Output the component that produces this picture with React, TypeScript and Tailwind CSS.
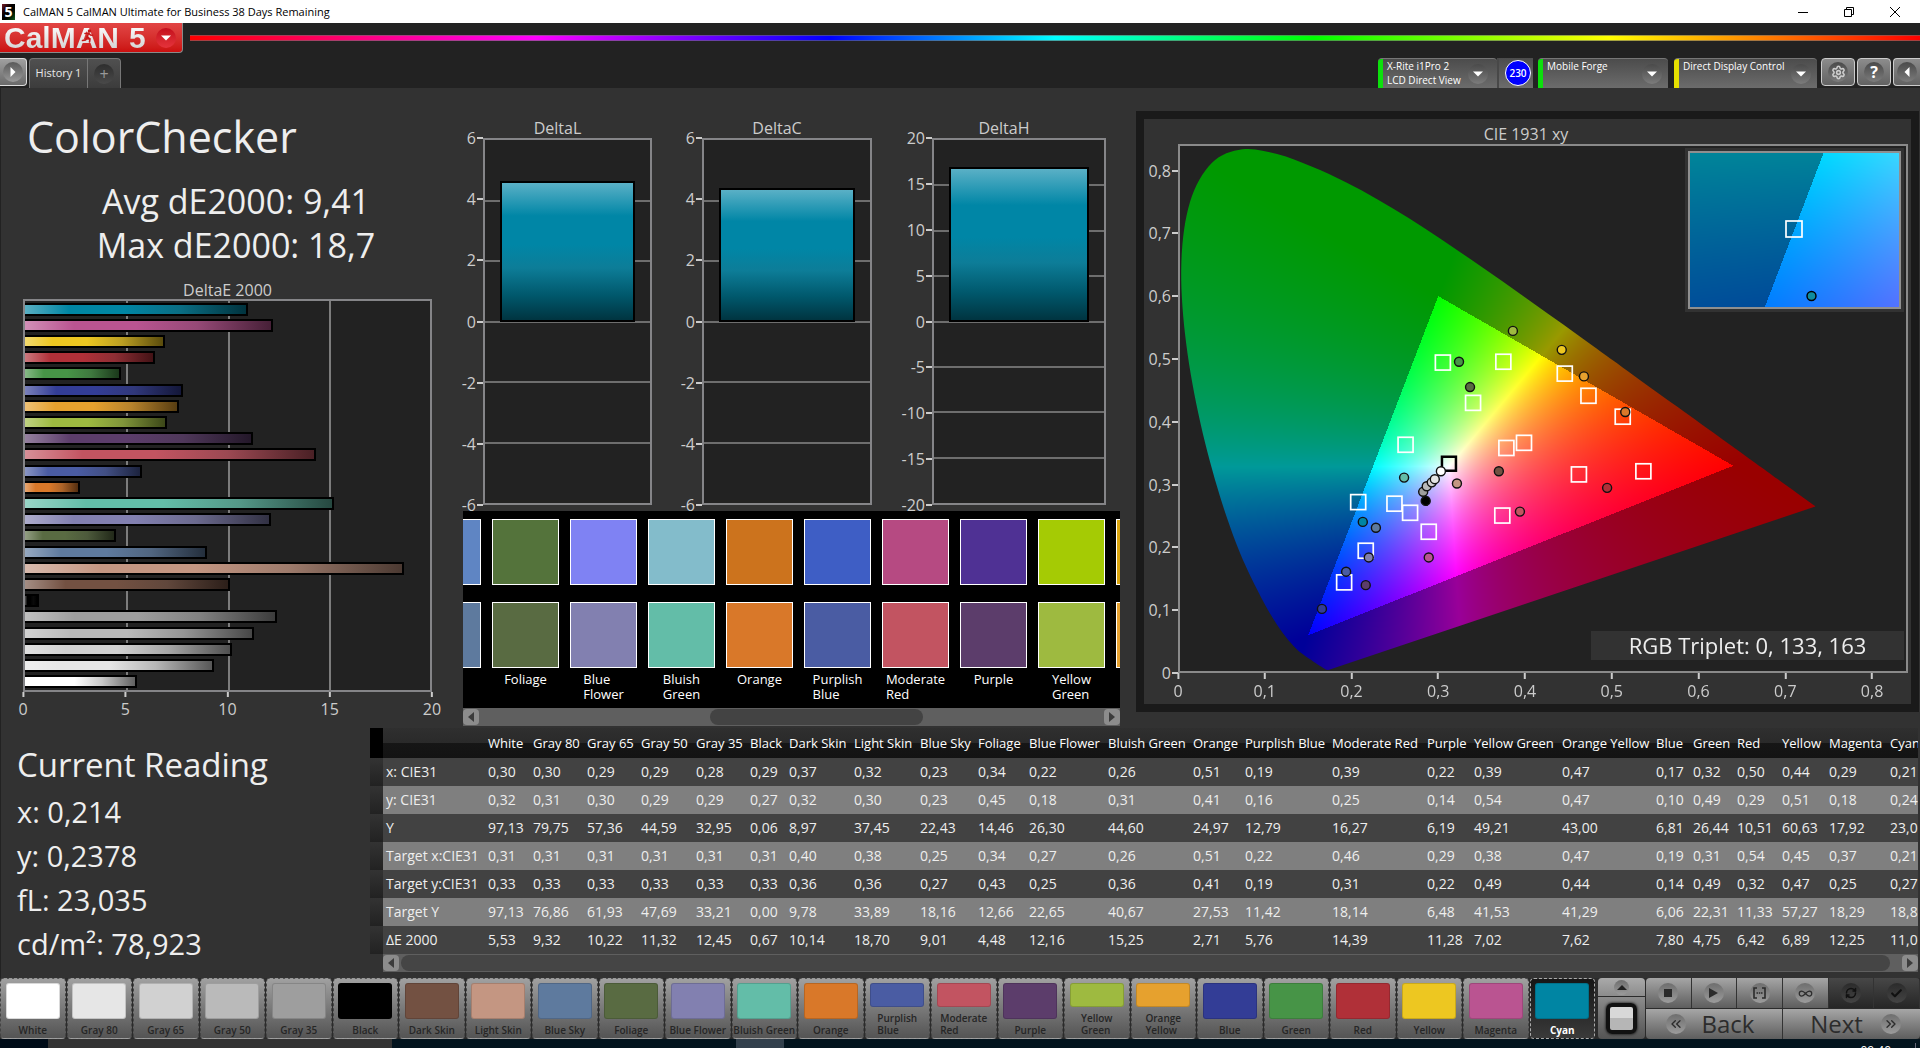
import { useEffect, useRef } from "react";
import type { ReactNode } from "react";
import clsx from "clsx";
import { Check, ChevronsLeft, ChevronsRight, Infinity as InfinityIcon, RefreshCw, Settings } from "lucide-react";

type Patch = { name: string; color: string; de: number };

const patches: Patch[] = [
    { name: "White", color: "#ffffff", de: 5.53 },
    { name: "Gray 80", color: "#e6e6e6", de: 9.32 },
    { name: "Gray 65", color: "#d1d1d1", de: 10.22 },
    { name: "Gray 50", color: "#bababa", de: 11.32 },
    { name: "Gray 35", color: "#9e9e9e", de: 12.45 },
    { name: "Black", color: "#000000", de: 0.67 },
    { name: "Dark Skin", color: "#735142", de: 10.14 },
    { name: "Light Skin", color: "#c49682", de: 18.7 },
    { name: "Blue Sky", color: "#5e7a9e", de: 9.01 },
    { name: "Foliage", color: "#596b42", de: 4.48 },
    { name: "Blue Flower", color: "#8280b0", de: 12.16 },
    { name: "Bluish Green", color: "#63bda8", de: 15.25 },
    { name: "Orange", color: "#d97829", de: 2.71 },
    { name: "Purplish Blue", color: "#4a5ca3", de: 5.76 },
    { name: "Moderate Red", color: "#c25461", de: 14.39 },
    { name: "Purple", color: "#5c3d6b", de: 11.28 },
    { name: "Yellow Green", color: "#9eba40", de: 7.02 },
    { name: "Orange Yellow", color: "#e6a12e", de: 7.62 },
    { name: "Blue", color: "#333d96", de: 7.8 },
    { name: "Green", color: "#479447", de: 4.75 },
    { name: "Red", color: "#b03038", de: 6.42 },
    { name: "Yellow", color: "#edc721", de: 6.89 },
    { name: "Magenta", color: "#ba5491", de: 12.25 },
    { name: "Cyan", color: "#0085a3", de: 11.02 },
];

const comparison = [
    { name: "Blue Sky", actual: "#5f85c3", target: "#5e7a9e" },
    { name: "Foliage", actual: "#54733b", target: "#596b42" },
    { name: "Blue Flower", actual: "#7f82f3", target: "#8280b0" },
    { name: "Bluish Green", actual: "#83bccb", target: "#63bda8" },
    { name: "Orange", actual: "#cc731d", target: "#d97829" },
    { name: "Purplish Blue", actual: "#3e5ec5", target: "#4a5ca3" },
    { name: "Moderate Red", actual: "#b64a82", target: "#c25461" },
    { name: "Purple", actual: "#4f3194", target: "#5c3d6b" },
    { name: "Yellow Green", actual: "#a5cb04", target: "#9eba40" },
    { name: "Orange Yellow", actual: "#dba50d", target: "#e6a12e" },
];

const columnWidths = [45, 54, 54, 55, 54, 39, 65, 66, 58, 51, 79, 85, 52, 87, 95, 47, 88, 94, 37, 44, 45, 47, 61, 64];

const tableRows = [
    { label: "x: CIE31", values: "0,30 0,30 0,29 0,29 0,28 0,29 0,37 0,32 0,23 0,34 0,22 0,26 0,51 0,19 0,39 0,22 0,39 0,47 0,17 0,32 0,50 0,44 0,29 0,21" },
    { label: "y: CIE31", values: "0,32 0,31 0,30 0,29 0,29 0,27 0,32 0,30 0,23 0,45 0,18 0,31 0,41 0,16 0,25 0,14 0,54 0,47 0,10 0,49 0,29 0,51 0,18 0,24" },
    { label: "Y", values: "97,13 79,75 57,36 44,59 32,95 0,06 8,97 37,45 22,43 14,46 26,30 44,60 24,97 12,79 16,27 6,19 49,21 43,00 6,81 26,44 10,51 60,63 17,92 23,0" },
    { label: "Target x:CIE31", values: "0,31 0,31 0,31 0,31 0,31 0,31 0,40 0,38 0,25 0,34 0,27 0,26 0,51 0,22 0,46 0,29 0,38 0,47 0,19 0,31 0,54 0,45 0,37 0,21" },
    { label: "Target y:CIE31", values: "0,33 0,33 0,33 0,33 0,33 0,33 0,36 0,36 0,27 0,43 0,25 0,36 0,41 0,19 0,31 0,22 0,49 0,44 0,14 0,49 0,32 0,47 0,25 0,27" },
    { label: "Target Y", values: "97,13 76,86 61,93 47,69 33,21 0,00 9,78 33,89 18,16 12,66 22,65 40,67 27,53 11,42 18,14 6,48 41,53 41,29 6,06 22,31 11,33 57,27 18,29 18,8" },
    { label: "ΔE 2000", values: "5,53 9,32 10,22 11,32 12,45 0,67 10,14 18,70 9,01 4,48 12,16 15,25 2,71 5,76 14,39 11,28 7,02 7,62 7,80 4,75 6,42 6,89 12,25 11,0" },
];

// Spectral locus, 400 - 700 nm
const locus: [number, number][] = [
    [0.1733, 0.0048], [0.1714, 0.0051], [0.1689, 0.0069], [0.1644, 0.0109], [0.1566, 0.0177],
    [0.144, 0.0297], [0.1355, 0.0399], [0.1241, 0.0578], [0.1096, 0.0868], [0.0913, 0.1327], [0.0687, 0.2007],
    [0.0454, 0.295], [0.0235, 0.4127], [0.0082, 0.5384], [0.0039, 0.6548], [0.0139, 0.7502], [0.0389, 0.812],
    [0.0743, 0.8338], [0.1142, 0.8262], [0.1547, 0.8059], [0.1929, 0.7816], [0.2296, 0.7543], [0.2658, 0.7243],
    [0.3016, 0.6923], [0.3373, 0.6589], [0.3731, 0.6245], [0.4087, 0.5896], [0.4441, 0.5547], [0.4788, 0.5202],
    [0.5125, 0.4866], [0.5752, 0.4242], [0.627, 0.3725], [0.6658, 0.334], [0.6915, 0.3083], [0.719, 0.2809],
    [0.7347, 0.2653],
];

const targets: [number, number][] = [
    [0.3053, 0.4943], [0.375, 0.4956], [0.4458, 0.4767], [0.4731, 0.4414], [0.3401, 0.4301], [0.5126, 0.4081],
    [0.2623, 0.3634], [0.3785, 0.3583], [0.3988, 0.3665], [0.4621, 0.3162], [0.5364, 0.3212], [0.2077, 0.2721],
    [0.2495, 0.2696], [0.2675, 0.2551], [0.289, 0.2249], [0.3738, 0.2507], [0.2164, 0.1947], [0.1915, 0.1443],
];

const readings: [number, number, string][] = [
    [0.386, 0.5447, "#9eba40"], [0.4423, 0.5145, "#edc721"], [0.4679, 0.4723, "#e6a12e"], [0.5155, 0.4156, "#d97829"],
    [0.3239, 0.4956, "#479447"], [0.3366, 0.4553, "#596b42"], [0.2606, 0.3111, "#63bda8"], [0.3698, 0.3212, "#735142"],
    [0.3215, 0.3017, "#c49682"], [0.4946, 0.2948, "#b03038"], [0.3941, 0.257, "#c25461"], [0.213, 0.2406, "#0085a3"],
    [0.2281, 0.2312, "#5e7a9e"], [0.289, 0.184, "#ba5491"], [0.2199, 0.184, "#8280b0"], [0.1938, 0.1613, "#4a5ca3"],
    [0.2164, 0.1399, "#5c3d6b"], [0.1659, 0.1021, "#333d96"], [0.2855, 0.274, "#000000"], [0.2826, 0.2885, "#9e9e9e"],
    [0.2867, 0.2973, "#bababa"], [0.2925, 0.3036, "#d1d1d1"], [0.296, 0.3086, "#e6e6e6"], [0.303, 0.3212, "#ffffff"],
];

type Domain = { x0: number; x1: number; y0: number; y1: number };

const fullDomain: Domain = { x0: 0, x1: 0.8414, y0: 0, y1: 0.8423 };
const insetDomain: Domain = { x0: 0.1739, x1: 0.2441, y0: 0.2365, y1: 0.3075 };

function xyToRgb(x: number, y: number) {
    const X = x / y;
    const Z = (1 - x - y) / y;
    const linear = [
        3.2406 * X - 1.5372 - 0.4986 * Z,
        -0.9689 * X + 1.8758 + 0.0415 * Z,
        0.0557 * X - 0.204 + 1.057 * Z,
    ];
    const inside = linear.every((v) => v >= 0);
    const max = Math.max(...linear);
    // out of gamut colors are drawn at 60%
    return linear.map((v) => (Math.max(v, 0) / max) * (inside ? 255 : 153));
}

function Chromaticity({ domain, width, height, clipped }: { domain: Domain; width: number; height: number; clipped?: boolean }) {
    const ref = useRef<HTMLCanvasElement>(null);

    useEffect(() => {
        const ctx = ref.current?.getContext("2d");
        if (!ctx) return;
        const buffer = document.createElement("canvas");
        buffer.width = width;
        buffer.height = height;
        const bctx = buffer.getContext("2d")!;
        const image = bctx.createImageData(width, height);
        for (let j = 0; j < height; j++) {
            const y = domain.y1 - ((j + 0.5) / height) * (domain.y1 - domain.y0);
            for (let i = 0; i < width; i++) {
                const x = domain.x0 + ((i + 0.5) / width) * (domain.x1 - domain.x0);
                const [r, g, b] = xyToRgb(x, y);
                image.data.set([r, g, b, 255], (j * width + i) * 4);
            }
        }
        bctx.putImageData(image, 0, 0);

        ctx.clearRect(0, 0, width, height);
        ctx.save();
        if (clipped) {
            const pts = locus.map(([x, y]) => [
                ((x - domain.x0) / (domain.x1 - domain.x0)) * width,
                ((domain.y1 - y) / (domain.y1 - domain.y0)) * height,
            ]);
            ctx.beginPath();
            ctx.moveTo(pts[0][0], pts[0][1]);
            for (let i = 0; i < pts.length - 1; i++) {
                const a = pts[Math.max(i - 1, 0)];
                const b = pts[i];
                const c = pts[i + 1];
                const d = pts[Math.min(i + 2, pts.length - 1)];
                ctx.bezierCurveTo(
                    b[0] + (c[0] - a[0]) / 6, b[1] + (c[1] - a[1]) / 6,
                    c[0] - (d[0] - b[0]) / 6, c[1] - (d[1] - b[1]) / 6,
                    c[0], c[1],
                );
            }
            ctx.closePath();
            ctx.clip();
        }
        ctx.drawImage(buffer, 0, 0);
        ctx.restore();
    }, [domain, width, height, clipped]);

    return <canvas ref={ref} width={width} height={height} className="block h-full w-full" />;
}

function TitleBar() {
    return (
        <header className="flex h-[23px] items-center justify-between bg-white text-black">
            <div className="flex items-center gap-2 pl-[2px]">
                <span className="flex h-4 w-[13px] items-center justify-center bg-gradient-to-br from-[#7a1f2a] via-black to-[#14601f] text-sm leading-none font-bold text-white">5</span>
                <h1 className="text-[11px] leading-4">CalMAN 5 CalMAN Ultimate for Business 38 Days Remaining</h1>
            </div>
            <div className="flex pr-[2px]">
                <button aria-label="Minimize" className="flex h-[23px] w-[46px] items-center justify-center">
                    <svg width="10" height="10" viewBox="0 0 10 10"><path d="M0 5.500H10" stroke="#000" /></svg>
                </button>
                <button aria-label="Restore" className="flex h-[23px] w-[46px] items-center justify-center">
                    <svg width="10" height="10" viewBox="0 0 10 10" fill="none" stroke="#000"><path d="M.5 2.500h7v7h-7zM2.500 2.500v-2h7v7h-2" /></svg>
                </button>
                <button aria-label="Close" className="flex h-[23px] w-[46px] items-center justify-center">
                    <svg width="10" height="10" viewBox="0 0 10 10"><path d="M0 0L10 10M10 0L0 10" stroke="#000" /></svg>
                </button>
            </div>
        </header>
    );
}

function Knob({ children, className }: { children: ReactNode; className?: string }) {
    return (
        <span className={clsx("flex size-5 shrink-0 items-center justify-center rounded-full bg-gradient-to-b", className ?? "from-[#4a4a4a] to-[#7c7c7c]")}>
            {children}
        </span>
    );
}

function DownArrow() {
    return <svg width="10" height="6" viewBox="0 0 10 6"><path d="M0 0.500h10L5 5.500z" fill="#fff" /></svg>;
}

function DevicePanel({ bar, lines, className }: { bar: string; lines: string[]; className: string }) {
    return (
        <button className={clsx("flex h-[30px] overflow-hidden rounded-t-sm border-t border-[#777] bg-gradient-to-b from-[#4c4c4c] to-[#6c6c6c] text-left text-[10px] leading-[14px] text-white", className)}>
            <span className={clsx("h-full w-[5px] shrink-0", bar)} />
            <span className="flex-1 pl-1 whitespace-nowrap">{lines.map((l) => <span key={l} className="block">{l}</span>)}</span>
            <span className="self-center pr-[6px]"><Knob><DownArrow /></Knob></span>
        </button>
    );
}

function Toolbar() {
    return (
        <div className="bg-[#222]">
            <div className="flex items-start">
                <button aria-label="CalMAN 5 menu" className="flex h-[30px] w-[183px] items-center justify-between rounded-br border-r border-b border-[#8a8a8a] bg-gradient-to-b from-[#e24545] to-[#cb0e0e] pr-[6px] pl-1">
                    <span className="relative flex gap-[10px] bg-gradient-to-b from-white to-[#cfcfcf] bg-clip-text font-[Liberation_Sans] text-[30px] leading-[28px] font-bold text-transparent">
                        <span>CalMAN</span>
                        <span>5</span>
                        <svg className="absolute top-[5px] left-[77px]" width="14" height="14" viewBox="0 0 14 14" fill="none" stroke="#c41a1a" strokeWidth="1.600" strokeLinecap="round">
                            <circle cx="8.500" cy="2" r="1" fill="#c41a1a" />
                            <path d="M4 4.500l3.500-.5 2 2 2 .3M7.500 4.500L6 8l3 2-.5 3M6 8.500L4.500 11 1.500 11.500" />
                        </svg>
                    </span>
                    <Knob className="from-[#c40d1c] to-[#e5333b]"><DownArrow /></Knob>
                </button>
                <div className="mt-3 ml-[7px] h-[6px] flex-1 border-y border-[#6b6b6b]/60 bg-[linear-gradient(to_right,#f00,#f0f_20%,#00f_37%,#0ff_50%,#0f0_65%,#ff0_82%,#f00)]" />
            </div>
            <div className="flex h-[35px] items-end justify-between">
                <div className="flex h-[30px] items-start">
                    <button aria-label="Expand" className="mr-[2px] flex h-7 w-[27px] items-center justify-center rounded-r border border-l-0 border-[#ddd] bg-gradient-to-b from-[#a0a0a0] to-[#6a6a6a]">
                        <Knob className="from-[#5a5a5a] to-[#9a9a9a]"><svg width="6" height="10" viewBox="0 0 6 10"><path d="M0.500 0v10L5.500 5z" fill="#fff" /></svg></Knob>
                    </button>
                    <div className="flex h-full rounded-t border border-b-0 border-[#777] bg-gradient-to-b from-[#505050] to-[#3c3c3c]">
                        <button className="w-[58px] border-r border-[#777] text-[11px] text-[#e8e8e8]">History 1</button>
                        <button aria-label="Add tab" className="flex w-8 items-center justify-center text-base text-[#999]"><Knob className="from-[#2e2e2e] to-[#4a4a4a]">+</Knob></button>
                    </div>
                </div>
                <div className="flex h-[30px] items-start">
                    <DevicePanel bar="bg-[#0ce00c]" lines={["X-Rite i1Pro 2", "LCD Direct View"]} className="w-[119px] pr-[3px]" />
                    <div className="mr-[5px] flex h-[30px] w-9 items-center justify-center border-l-2 border-[#484848] bg-gradient-to-b from-[#4c4c4c] to-[#6c6c6c] pl-1">
                        <span className="flex size-[26px] items-center justify-center rounded-full border border-white bg-[#0000fe] text-[10px] font-semibold text-white">230</span>
                    </div>
                    <DevicePanel bar="bg-[#0ce00c]" lines={["Mobile Forge"]} className="mr-[6px] w-[130px]" />
                    <DevicePanel bar="bg-[#e6e000]" lines={["Direct Display Control"]} className="mr-1 w-[143px]" />
                    <div className="flex gap-[2px] overflow-hidden">
                        <button aria-label="Settings" className="flex h-7 w-[34px] items-center justify-center rounded border border-[#ccc] bg-gradient-to-b from-[#8c8c8c] to-[#626262]"><Knob><Settings size={15} strokeWidth={2.500} className="text-[#ccc]" /></Knob></button>
                        <button aria-label="Help" className="flex h-7 w-[34px] items-center justify-center rounded border border-[#ccc] bg-gradient-to-b from-[#8c8c8c] to-[#626262] text-base leading-none font-bold text-white"><Knob>?</Knob></button>
                        <button aria-label="Collapse" className="flex h-7 w-[27px] items-center justify-center rounded-l border border-r-0 border-[#ccc] bg-gradient-to-b from-[#8c8c8c] to-[#626262]"><Knob><svg width="6" height="10" viewBox="0 0 6 10"><path d="M5.500 0v10L.5 5z" fill="#fff" /></svg></Knob></button>
                    </div>
                </div>
            </div>
        </div>
    );
}

function DeltaEChart() {
    return (
        <figure className="mr-[31px] ml-[22px] text-base leading-5 text-[#ccc]">
            <figcaption className="h-[19px] text-center">DeltaE 2000</figcaption>
            <div className="relative flex h-[393px] flex-col justify-around border-2 border-[#858588] bg-[#222]">
                {[25, 50, 75].map((p) => <span key={p} className="absolute inset-y-0 w-[2px] bg-[#7d7d7d]" style={{ left: `${p}%` }} />)}
                {[...patches].reverse().map((p) => (
                    <div
                        key={p.name}
                        className="relative h-[13px] border-2 border-l-0 border-black"
                        style={{
                            width: `${p.de * 5}%`,
                            backgroundImage: "linear-gradient(to right, rgba(255,255,255,.35), rgba(255,255,255,0) 20%, rgba(0,0,0,0) 45%, rgba(40,40,40,.25) 70%, rgba(0,0,0,.62))",
                            backgroundColor: p.color,
                        }}
                    />
                ))}
            </div>
            <div className="relative h-[27px]">
                {[0, 5, 10, 15, 20].map((t) => (
                    <span key={t} className="absolute flex -translate-x-1/2 flex-col items-center" style={{ left: `${t * 5}%` }}>
                        <span className="h-[5px] w-[2px] bg-[#ccc]" />
                        <span className="pt-[2px]">{t}</span>
                    </span>
                ))}
            </div>
        </figure>
    );
}

function AxisTick({ label, top }: { label: string; top: number }) {
    return (
        <span className="absolute right-0 flex -translate-y-1/2 items-center" style={{ top: `${top}%` }}>
            {label}
            <span className="ml-px h-[2px] w-[6px] bg-[#ccc]" />
        </span>
    );
}

function DeltaChart({ title, max, step, value, className, axis }: { title: string; max: number; step: number; value: number; className: string; axis: string }) {
    const ticks: number[] = [];
    for (let t = max; t >= -max; t -= step) ticks.push(t);
    const pos = (t: number) => ((max - t) / (2 * max)) * 100;
    return (
        <figure className={clsx("min-w-0 text-base leading-5 text-[#ccc]", className)}>
            <figcaption className="h-5 text-center">{title}</figcaption>
            <div className="flex h-[367px]">
                <div className={clsx("relative", axis)}>
                    {ticks.map((t) => <AxisTick key={t} label={String(t)} top={pos(t)} />)}
                </div>
                <div className="relative flex-1 border-2 border-[#858588] bg-[#222]">
                    {ticks.slice(1, -1).map((t) => <span key={t} className="absolute inset-x-0 h-[2px] -translate-y-1/2 bg-[#6e6e6e]" style={{ top: `${pos(t)}%` }} />)}
                    <div
                        className="absolute inset-x-[9%] bottom-1/2 border-2 border-black bg-[linear-gradient(to_bottom,#5ab0c6,#0086a6_24%,#0086a6_45%,#0d7d98_62%,#00586c_82%,#003440)]"
                        style={{ height: `${(value / max) * 50}%` }}
                    />
                </div>
            </div>
        </figure>
    );
}

function Arrow({ left }: { left?: boolean }) {
    return (
        <button aria-label={left ? "Scroll left" : "Scroll right"} className="flex h-[16px] w-4 shrink-0 items-center justify-center rounded bg-[#8c8c8c]">
            <svg width="6" height="10" viewBox="0 0 6 10"><path d={left ? "M6 0v10L0 5z" : "M0 0v10L6 5z"} fill="#3c3c3c" /></svg>
        </button>
    );
}

function PatchComparison() {
    return (
        <div className="bg-black text-[13px] leading-[15px] text-white">
            <div className="h-[197px] overflow-hidden pt-2">
                <ul className="-ml-[49px] flex w-max gap-[11px]">
                    {comparison.map((c) => (
                        <li key={c.name} className="flex w-[67px] flex-col items-center">
                            <div className="h-[66px] w-full border border-white" style={{ backgroundColor: c.actual }} />
                            <div className="mt-[17px] h-[66px] w-full border border-white" style={{ backgroundColor: c.target }} />
                            <span className="mt-1 w-min">{c.name}</span>
                        </li>
                    ))}
                </ul>
            </div>
            <div className="flex h-[18px] items-center justify-between bg-[#5f5f5f]">
                <Arrow left />
                <div className="grid h-full flex-1 grid-cols-[37fr_34fr_29fr]"><span className="col-start-2 my-px rounded-lg bg-[#434343]" /></div>
                <Arrow />
            </div>
        </div>
    );
}

function CieChart() {
    const px = (x: number) => (x / fullDomain.x1) * 730;
    const py = (y: number) => 529 - (y / fullDomain.y1) * 529;
    const axis = [0, 0.1, 0.2, 0.3, 0.4, 0.5, 0.6, 0.7, 0.8];
    const label = (v: number) => String(v).replace(".", ",");
    return (
        <figure className="flex h-[601px] flex-col border-8 border-[#1a1a1a] bg-[#323232] pt-[5px] pr-[3px] text-base leading-5 text-[#ccc]">
            <figcaption className="h-5 text-center">CIE 1931 xy</figcaption>
            <div className="flex h-[529px]">
                <div className="relative w-[34px]">
                    {axis.map((t) => <AxisTick key={t} label={label(t)} top={100 - (t / fullDomain.y1) * 100} />)}
                </div>
                <div className="relative flex-1 bg-[#222]">
                    <Chromaticity domain={fullDomain} width={730} height={529} clipped />
                    <svg className="absolute inset-0 h-full w-full" viewBox="0 0 730 529" preserveAspectRatio="none" fill="none">
                        <rect x="1" y="1" width="728" height="527" stroke="#8a8a8a" strokeWidth="2" />
                        {targets.map(([x, y]) => <rect key={`${x}${y}`} x={px(x) - 7.5} y={py(y) - 7.5} width="15" height="15" stroke="#fff" strokeWidth="1.700" />)}
                        <rect x={px(0.3123) - 7} y={py(0.3332) - 7} width="14" height="14" stroke="#000" strokeWidth="2.500" />
                        {readings.map(([x, y, c]) => <circle key={`${x}${y}`} cx={px(x)} cy={py(y)} r="4.500" fill={c} stroke="#111" strokeWidth="1.400" />)}
                    </svg>
                    <div className="absolute top-1 right-1 h-[164px] w-[219px] bg-[#323232] p-[3px]">
                        <div className="relative h-full w-full border-2 border-[#8f8f8f]">
                            <Chromaticity domain={insetDomain} width={209} height={154} />
                            <svg className="absolute inset-0 h-full w-full" viewBox="0 0 209 154" preserveAspectRatio="none" fill="none">
                                <rect x="96" y="68" width="16" height="16" stroke="#fff" strokeWidth="1.700" />
                                <circle cx="121.500" cy="143" r="4.500" fill="#0f8c9e" stroke="#000" strokeWidth="1.400" />
                            </svg>
                        </div>
                    </div>
                    <p className="absolute right-1 bottom-[13px] h-[29px] w-[313px] bg-[#323232] text-center text-[22px] leading-[29px] text-[#eee]">RGB Triplet: 0, 133, 163</p>
                </div>
            </div>
            <div className="relative ml-[34px] h-[30px]">
                {axis.map((t) => (
                    <span key={t} className="absolute flex -translate-x-1/2 flex-col items-center" style={{ left: `${(t / fullDomain.x1) * 100}%` }}>
                        <span className="h-[6px] w-[2px] bg-[#ccc]" />
                        <span className="pt-[2px]">{label(t)}</span>
                    </span>
                ))}
            </div>
        </figure>
    );
}

function ReadingsTable() {
    return (
        <div className="min-w-0 flex-1 overflow-hidden">
            <table className="w-max table-fixed border-collapse text-left text-sm text-[#eee]">
                <colgroup>
                    <col className="w-[13px]" />
                    <col className="w-[102px]" />
                    {columnWidths.map((w, i) => <col key={i} style={{ width: w }} />)}
                </colgroup>
                <thead>
                    <tr className="h-[30px] bg-[linear-gradient(to_bottom,#2f2f2f,#2a2a2a_50%,#161616_50%,#131313)] text-[13px]">
                        <td className="bg-black p-0" />
                        <td className="p-0" />
                        {patches.map((p) => <th key={p.name} scope="col" className="p-0 pl-[3px] font-normal whitespace-nowrap text-white">{p.name}</th>)}
                    </tr>
                </thead>
                <tbody>
                    {tableRows.map((r) => (
                        <tr key={r.label} className="h-[28px] odd:bg-[#424242] even:bg-[#7f7f7f]">
                            <td className="bg-gradient-to-b from-[#333] to-[#222] p-0" />
                            <th scope="row" className="p-0 pl-[3px] font-normal whitespace-nowrap">{r.label}</th>
                            {r.values.split(" ").map((v, i) => <td key={i} className="p-0 pl-[3px] whitespace-nowrap">{v}</td>)}
                        </tr>
                    ))}
                </tbody>
            </table>
            <div className="ml-[13px] flex h-[18px] items-center gap-[2px] bg-[#5f5f5f]">
                <Arrow left />
                <span className="my-px mr-[10px] h-4 flex-1 rounded-lg bg-[#454545]" />
                <Arrow />
            </div>
        </div>
    );
}

function PatchButton({ patch, selected }: { patch: Patch; selected: boolean }) {
    const wraps = ["Purplish Blue", "Moderate Red", "Yellow Green", "Orange Yellow"].includes(patch.name);
    return (
        <button
            className={clsx(
                "flex min-w-0 flex-col items-center justify-between rounded-sm border border-dashed pt-1 pb-[2px] text-[10px] leading-3",
                selected ? "border-[#aaa] bg-gradient-to-b from-[#161616] to-[#3a3a3a] font-bold text-white" : "border-[#999] border-x-[#444] bg-gradient-to-b from-[#a0a0a0] to-[#545454] font-semibold text-[#262626]",
            )}
        >
            <span className={clsx("w-[54px] rounded-[3px] border border-black/15", wraps ? "h-6" : "h-9")} style={{ backgroundColor: patch.color }} />
            <span className={clsx("text-left", wraps ? "w-min" : "whitespace-nowrap")}>{patch.name}</span>
        </button>
    );
}

function ToolButton({ label, dark, children }: { label: string; dark?: boolean; children: ReactNode }) {
    return (
        <button aria-label={label} className={clsx("flex items-center justify-center border-r border-[#333] bg-gradient-to-b text-[#2c2c2c]", dark ? "from-[#474747] to-[#262626]" : "from-[#a6a6a6] to-[#5e5e5e]")}>
            <Knob className={dark ? "from-[#2b2b2b] to-[#444]" : "from-[#6e6e6e] to-[#9c9c9c]"}>{children}</Knob>
        </button>
    );
}

function BottomBar() {
    return (
        <div className="flex h-[61px] bg-[#2b2b2b]">
            <div className="grid flex-1 grid-cols-[repeat(24,minmax(0,1fr))] gap-px">
                {patches.map((p) => <PatchButton key={p.name} patch={p} selected={p.name === "Cyan"} />)}
            </div>
            <div className="flex w-[51px] flex-col gap-px pr-px pl-[3px]">
                <button aria-label="Up" className="flex h-[18px] items-center justify-center rounded-t bg-gradient-to-b from-[#aaa] to-[#8c8c8c]">
                    <span className="flex size-[15px] items-center justify-center rounded-full bg-gradient-to-b from-[#6e6e6e] to-[#9c9c9c]">
                        <svg width="10" height="5" viewBox="0 0 10 5"><path d="M0 5h10L5 0z" fill="#222" /></svg>
                    </span>
                </button>
                <button aria-label="Display" className="flex flex-1 items-center justify-center rounded-b bg-gradient-to-b from-[#8c8c8c] to-[#545454]">
                    <span className="h-[31px] w-[31px] rounded-md border-4 border-[#111] bg-[linear-gradient(to_bottom,#d8d8d8_50%,#b6b6b6_50%)] shadow-[0_0_3px_#000]" />
                </button>
            </div>
            <div className="grid w-[274px] grid-rows-2 gap-px overflow-hidden rounded">
                <div className="grid grid-cols-6">
                    <ToolButton label="Stop"><span className="size-2 bg-[#2a2a2a]" /></ToolButton>
                    <ToolButton label="Play"><svg width="9" height="10" viewBox="0 0 9 10"><path d="M0 0v10L9 5z" fill="#2a2a2a" /></svg></ToolButton>
                    <ToolButton label="Read series">
                        <svg width="13" height="12" viewBox="0 0 13 12" fill="none" stroke="#2a2a2a" strokeWidth="1.600"><path d="M4 1H1v10h3M9 1h3v10H9M3.500 6h1.500M5.800 6h1.500M8 6h1.500" /></svg>
                    </ToolButton>
                    <ToolButton label="Read continuously"><InfinityIcon size={15} /></ToolButton>
                    <ToolButton label="Refresh" dark><RefreshCw size={12} strokeWidth={3} className="text-[#111]" /></ToolButton>
                    <ToolButton label="Accept" dark><Check size={13} strokeWidth={4} className="text-[#111]" /></ToolButton>
                </div>
                <div className="grid grid-cols-2 text-2xl leading-none font-medium text-[#2c2c2c]">
                    <button className="flex items-center justify-center gap-4 border-r border-[#333] bg-gradient-to-b from-[#a6a6a6] to-[#5e5e5e] pr-2">
                        <Knob className="from-[#6e6e6e] to-[#9c9c9c]"><ChevronsLeft size={16} /></Knob>
                        Back
                    </button>
                    <button className="flex items-center justify-center gap-[18px] bg-gradient-to-b from-[#a6a6a6] to-[#5e5e5e] pl-2">
                        Next
                        <Knob className="from-[#6e6e6e] to-[#9c9c9c]"><ChevronsRight size={16} /></Knob>
                    </button>
                </div>
            </div>
        </div>
    );
}

export default function App() {
    return (
        <div className="overflow-hidden bg-[#323232] font-['Open_Sans','Noto_Sans',sans-serif]">
            <TitleBar />
            <Toolbar />
            <main className="border-l border-[#222]">
                <div className="grid h-[640px] grid-cols-[462fr_657fr_800fr]">
                    <section className="min-w-0 pt-[21px] text-[#eee]">
                        <h2 className="pl-[26px] text-[43px] leading-[56px]">ColorChecker</h2>
                        <div className="mt-[14px] mb-[13px] pl-2 text-center text-[34px] leading-[44px]">
                            <p>Avg dE2000: 9,41</p>
                            <p>Max dE2000: 18,7</p>
                        </div>
                        <DeltaEChart />
                    </section>
                    <section className="min-w-0 pt-[30px]">
                        <div className="flex h-[393px] gap-[30px] pr-[14px]">
                            <DeltaChart title="DeltaL" max={6} step={2} value={4.65} className="flex-[189]" axis="w-5" />
                            <DeltaChart title="DeltaC" max={6} step={2} value={4.42} className="flex-[190]" axis="w-5" />
                            <DeltaChart title="DeltaH" max={20} step={5} value={17} className="flex-[204]" axis="w-[30px]" />
                        </div>
                        <PatchComparison />
                    </section>
                    <section className="min-w-0 pt-[23px] pr-px pl-4">
                        <CieChart />
                    </section>
                </div>
                <div className="flex h-[250px]">
                    <section className="w-[369px] shrink-0 pt-[15px] pl-4 text-[29px] leading-[44px] text-[#eee]">
                        <h2 className="mb-[3px] text-[33px]">Current Reading</h2>
                        <p>x: 0,214</p>
                        <p>y: 0,2378</p>
                        <p>fL: 23,035</p>
                        <p>cd/m²: 78,923</p>
                    </section>
                    <ReadingsTable />
                    <span className="w-[2px]" />
                </div>
            </main>
            <BottomBar />
            <footer className="flex h-[9px] overflow-hidden bg-[#03141e] text-xs leading-4 text-white">
                <span className="w-12 bg-[#000c18]" />
                <span className="w-[344px] bg-[#333]" />
                <span className="ml-[344px] w-12 bg-[#32404c]" />
                <time className="mt-1 ml-auto border-r border-[#667] pr-6">09:40</time>
                <span className="w-1" />
            </footer>
        </div>
    );
}
